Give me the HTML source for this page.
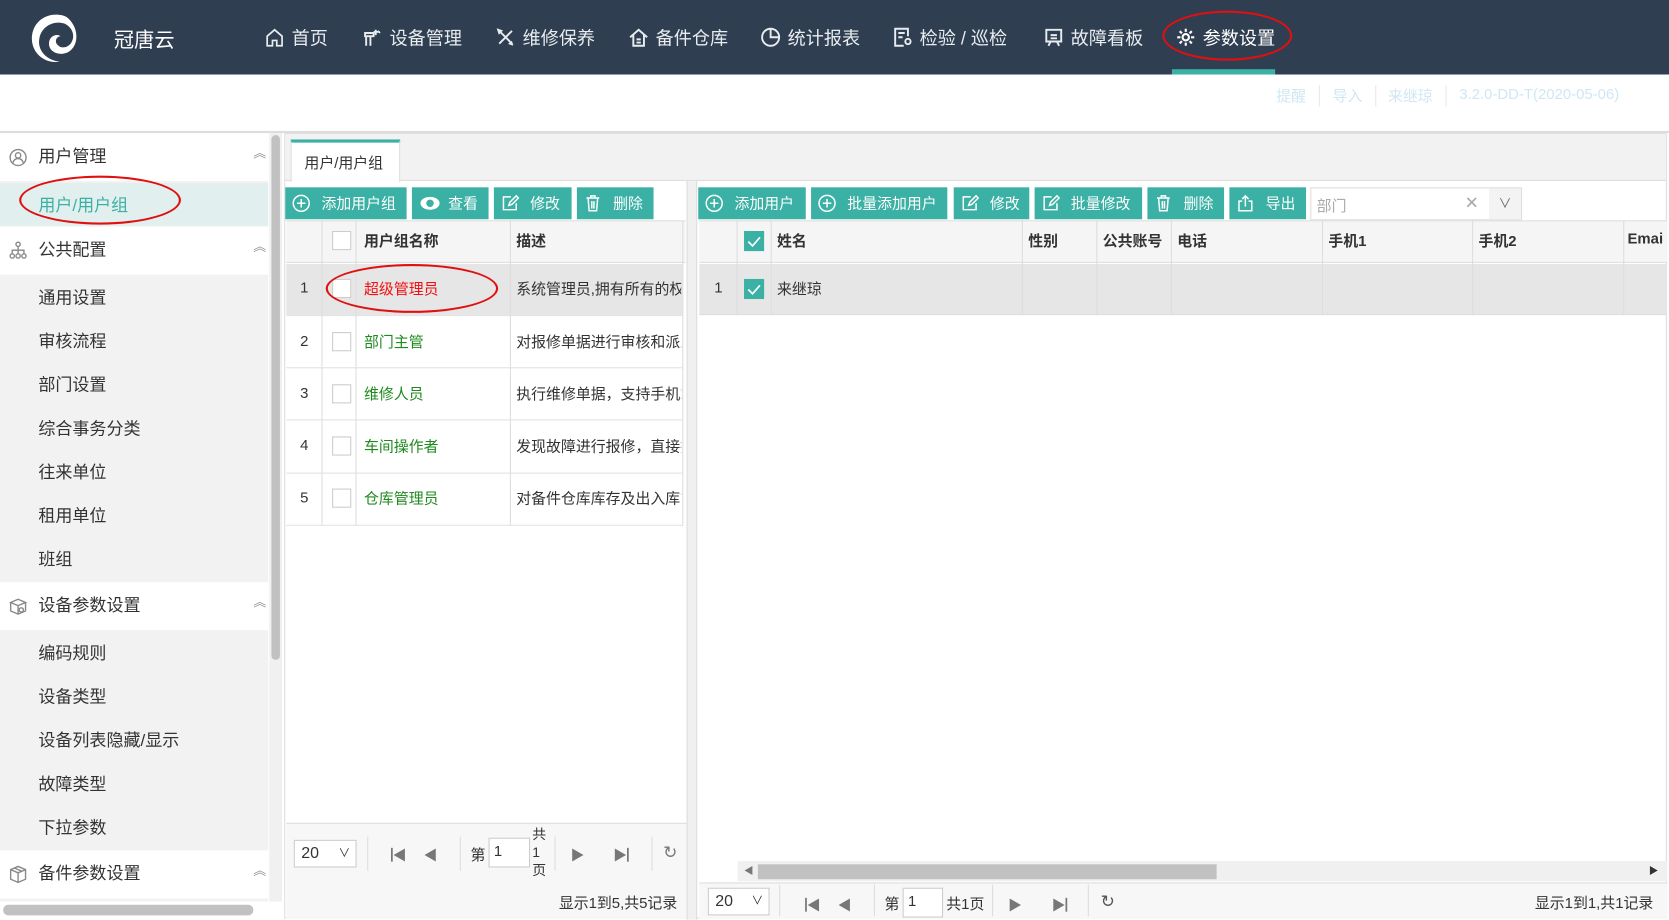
<!DOCTYPE html>
<html><head><meta charset="utf-8">
<style>
*{box-sizing:border-box;margin:0;padding:0}
html,body{width:1669px;height:920px;overflow:hidden;background:#fff}
#w{position:absolute;left:0;top:0;width:1568px;height:864px;transform:scale(1.06441);transform-origin:0 0;font-family:"Liberation Sans","Noto Sans CJK SC",sans-serif;font-size:14px;color:#333}
.a{position:absolute}
.hd{left:0;top:0;width:1568px;height:70px;background:#2f3e50}
.nav{color:#e8ecf0;font-size:17px;top:22px;white-space:nowrap}
.nav svg{vertical-align:-3px;margin-right:6px}
.top{color:#cfe7f4;font-size:14px;top:80px}
.sb{left:0;top:125px;width:252px;height:739px;background:#f2f2f2}
.sh{left:0;width:252px;height:45px;background:#fff;font-size:16px;color:#333}
.sh span{position:absolute;left:36px;top:8px}
.sh i{position:absolute;right:2px;top:10px;font-style:normal;color:#888;font-size:12px}
.si{left:36px;font-size:16px;color:#333}
.btn{top:176px;height:30px;background:#3bb0a5;color:#fff;font-size:14px;line-height:30px;white-space:nowrap}
.btn svg{position:absolute;left:6px;top:6px}
.btn b{font-weight:normal;position:absolute;top:0}
.th{font-weight:bold;font-size:14px;top:216px}
.cb{width:18px;height:18px;border:1px solid #ccc;background:#fff}
.vl{width:1px;background:#ddd}
.hl{height:1px;background:#e2e2e2}
.gr{color:#1e8a1e}
.sel{border:1px solid #ccc;background:#fff;height:26px;font-size:15px;padding-left:6px;line-height:24px}
.pg{color:#777;font-size:13px}
.ell{border:2px solid #e01010;border-radius:50%}
</style></head><body><div id="w">
<div class="a hd"></div>
<svg class="a" style="left:26px;top:10px" width="56" height="52" viewBox="0 0 56 52"><path d="M30 4C14 2 3 14 4 28c1 13 13 22 26 20C16 46 9 36 11 26 13 15 24 9 34 12c8 3 11 12 7 18-3 5-10 6-13 2-3-3-1-8 3-8-4-3-11 0-11 7 0 8 10 12 18 8 9-5 10-18 4-27-3-5-7-8-13-8z" fill="#fff"/></svg>
<div class="a" style="left:107px;top:23px;color:#fff;font-size:19px">冠唐云</div>
<div class="a nav" style="left:248px"><svg width="20" height="20" viewBox="0 0 20 20" fill="none" stroke="#e8ecf0" stroke-width="1.6"><path d="M3 9L10 3l7 6v9H12v-5H8v5H3z"/></svg>首页</div>
<div class="a nav" style="left:340px"><svg width="20" height="20" viewBox="0 0 20 20" fill="none" stroke="#e8ecf0" stroke-width="1.8"><path d="M4 18V9h4v9M3 6h8v3H3zM11 5h4M13 3v5M15 4l2 2"/></svg>设备管理</div>
<div class="a nav" style="left:465px"><svg width="20" height="20" viewBox="0 0 20 20" fill="none" stroke="#e8ecf0" stroke-width="1.8"><path d="M4 4l12 12M16 4L4 16M3 3l3 1-2 2zM17 17l-3-1 2-2"/></svg>维修保养</div>
<div class="a nav" style="left:590px"><svg width="20" height="20" viewBox="0 0 20 20" fill="none" stroke="#e8ecf0" stroke-width="1.8"><path d="M2 10L10 3l8 7M5 8v10h10V8M8 12h4M8 15h4"/></svg>备件仓库</div>
<div class="a nav" style="left:714px"><svg width="20" height="20" viewBox="0 0 20 20" fill="none" stroke="#e8ecf0" stroke-width="1.8"><circle cx="10" cy="10" r="8"/><path d="M10 2v8h8"/></svg>统计报表</div>
<div class="a nav" style="left:838px"><svg width="20" height="20" viewBox="0 0 20 20" fill="none" stroke="#e8ecf0" stroke-width="1.8"><path d="M11 18H3V2h12v7M6 6h6M6 10h4"/><circle cx="15" cy="14" r="2.5"/></svg>检验 / 巡检</div>
<div class="a nav" style="left:980px"><svg width="20" height="20" viewBox="0 0 20 20" fill="none" stroke="#e8ecf0" stroke-width="1.8"><path d="M3 3h14v11H3zM7 8h6M7 11h6M7 14l-2 4M13 14l2 4"/></svg>故障看板</div>
<div class="a nav" style="left:1104px;color:#fff"><svg width="20" height="20" viewBox="0 0 20 20" fill="none" stroke="#fff" stroke-width="2"><circle cx="10" cy="10" r="3"/><path d="M10 2v3M10 15v3M2 10h3M15 10h3M4.3 4.3l2.1 2.1M13.6 13.6l2.1 2.1M4.3 15.7l2.1-2.1M13.6 6.4l2.1-2.1"/></svg>参数设置</div>
<div class="a" style="left:1101px;top:65px;width:97px;height:5px;background:#3bb0a5"></div>
<div class="a ell" style="left:1092px;top:10px;width:122px;height:47px"></div>

<div class="a top" style="left:1199px">提醒</div>
<div class="a" style="left:1239px;top:80px;width:1px;height:20px;background:#e8e8e8"></div>
<div class="a top" style="left:1252px">导入</div>
<div class="a" style="left:1292px;top:80px;width:1px;height:20px;background:#e8e8e8"></div>
<div class="a top" style="left:1304px">来继琼</div>
<div class="a" style="left:1358px;top:80px;width:1px;height:20px;background:#e8e8e8"></div>
<div class="a top" style="left:1371px">3.2.0-DD-T(2020-05-06)</div>
<div class="a" style="left:0;top:123px;width:1568px;height:2px;background:#ddd"></div>

<div class="a sb"></div>
<div class="a sh" style="top:125px"><svg class="a" style="left:8px;top:14px" width="18" height="18" viewBox="0 0 18 18" fill="none" stroke="#888" stroke-width="1.3"><circle cx="9" cy="9" r="7.5"/><circle cx="9" cy="7" r="2.5"/><path d="M4 14c1-3 3-4 5-4s4 1 5 4"/></svg><span>用户管理</span><i>︽</i></div>
<div class="a" style="left:0;top:172px;width:252px;height:40px;background:#e1efee"></div>
<div class="a si" style="top:179px;color:#3bb0a5">用户/用户组</div>
<div class="a ell" style="left:18px;top:165px;width:152px;height:46px"></div>
<div class="a sh" style="top:213px"><svg class="a" style="left:8px;top:13px" width="18" height="18" viewBox="0 0 18 18" fill="none" stroke="#888" stroke-width="1.3"><circle cx="9" cy="3.5" r="2"/><circle cx="3.5" cy="14.5" r="2"/><circle cx="9" cy="14.5" r="2"/><circle cx="14.5" cy="14.5" r="2"/><path d="M9 5.5v7M3.5 12.5V9h11v3.5"/></svg><span>公共配置</span><i>︽</i></div>
<div class="a si" style="top:266px">通用设置</div>
<div class="a si" style="top:307px">审核流程</div>
<div class="a si" style="top:348px">部门设置</div>
<div class="a si" style="top:389px">综合事务分类</div>
<div class="a si" style="top:430px">往来单位</div>
<div class="a si" style="top:471px">租用单位</div>
<div class="a si" style="top:512px">班组</div>
<div class="a sh" style="top:547px"><svg class="a" style="left:8px;top:14px" width="18" height="18" viewBox="0 0 18 18" fill="none" stroke="#888" stroke-width="1.3"><path d="M2 5l7-3 7 3-7 3zM2 5v8l7 3 7-3V5M9 8v8"/><circle cx="12" cy="12" r="2"/></svg><span>设备参数设置</span><i>︽</i></div>
<div class="a si" style="top:600px">编码规则</div>
<div class="a si" style="top:641px">设备类型</div>
<div class="a si" style="top:682px">设备列表隐藏/显示</div>
<div class="a si" style="top:723px">故障类型</div>
<div class="a si" style="top:764px">下拉参数</div>
<div class="a sh" style="top:799px"><svg class="a" style="left:8px;top:13px" width="18" height="18" viewBox="0 0 18 18" fill="none" stroke="#888" stroke-width="1.3"><path d="M2 5l7-3 7 3v9l-7 3-7-3zM2 5l7 3 7-3M9 8v9M5.5 3.5l7 3"/></svg><span>备件参数设置</span><i>︽</i></div>
<div class="a" style="left:253px;top:125px;width:12px;height:739px;background:#f0f0f0"></div>
<div class="a" style="left:255px;top:127px;width:8px;height:493px;background:#c1c1c1;border-radius:4px"></div>
<div class="a" style="left:0;top:847px;width:265px;height:17px;background:#fff"></div>
<div class="a" style="left:3px;top:850px;width:235px;height:10px;background:#c1c1c1;border-radius:5px"></div>

<!-- main -->
<div class="a" style="left:267px;top:125px;width:1299px;height:738px;border:1px solid #ddd;background:#fff"></div>
<div class="a" style="left:268px;top:126px;width:1297px;height:44px;background:#f2f2f2;border-bottom:1px solid #ddd"></div>
<div class="a" style="left:273px;top:131px;width:103px;height:40px;background:#fff;border-top:3px solid #3bb0a5;border-left:1px solid #ddd;border-right:1px solid #ddd;font-size:14px;padding:9px 0 0 12px">用户/用户组</div>

<!-- left grid -->
<div class="a" style="left:645px;top:170px;width:10px;height:694px;background:#f0f0f0;border-left:1px solid #ddd;border-right:1px solid #ddd"></div>
<div class="a btn" style="left:268px;width:114px"><svg width="18" height="18" viewBox="0 0 18 18" fill="none" stroke="#fff" stroke-width="1.4"><circle cx="9" cy="9" r="7.5"/><path d="M9 5v8M5 9h8"/></svg><b style="left:34px">添加用户组</b></div>
<div class="a btn" style="left:387px;width:72px"><svg width="22" height="18" viewBox="0 0 22 18"><ellipse cx="11" cy="9" rx="9" ry="6" fill="#fff"/><circle cx="11" cy="9" r="3.5" fill="#3bb0a5"/></svg><b style="left:34px">查看</b></div>
<div class="a btn" style="left:464px;width:73px"><svg width="18" height="18" viewBox="0 0 18 18" fill="none" stroke="#fff" stroke-width="1.4"><path d="M10 3H3v12h12V9M8 11l1-3 6-6 2 2-6 6z"/></svg><b style="left:34px">修改</b></div>
<div class="a btn" style="left:542px;width:72px"><svg width="18" height="18" viewBox="0 0 18 18" fill="none" stroke="#fff" stroke-width="1.4"><path d="M3 4h12M7 4V2h4v2M4.5 4l1 12h7l1-12M8 7v7M10 7v7"/></svg><b style="left:34px">删除</b></div>

<div class="a" style="left:269px;top:207px;width:375px;height:40px;background:#f5f5f5;border-top:1px solid #ddd;border-bottom:1px solid #ddd"></div>
<div class="a cb" style="left:312px;top:217px"></div>
<div class="a th" style="left:342px">用户组名称</div>
<div class="a th" style="left:485px">描述</div>
<div class="a" style="left:269px;top:248px;width:372px;height:48px;background:#e6e6e6"></div>
<div class="a vl" style="left:302px;top:207px;height:287px"></div>
<div class="a vl" style="left:334px;top:207px;height:287px"></div>
<div class="a vl" style="left:479px;top:207px;height:287px"></div>
<div class="a vl" style="left:641px;top:207px;height:287px"></div>
<div class="a hl" style="left:269px;top:296px;width:372px"></div>
<div class="a hl" style="left:269px;top:345px;width:372px"></div>
<div class="a hl" style="left:269px;top:394px;width:372px"></div>
<div class="a hl" style="left:269px;top:444px;width:372px"></div>
<div class="a hl" style="left:269px;top:493px;width:372px"></div>
<div class="a" style="left:282px;top:262px">1</div><div class="a cb" style="left:312px;top:262px"></div><div class="a" style="left:342px;top:261px;color:#f01010">超级管理员</div><div class="a" style="left:485px;top:261px;width:155px;overflow:hidden;white-space:nowrap">系统管理员,拥有所有的权限</div>
<div class="a" style="left:282px;top:312px">2</div><div class="a cb" style="left:312px;top:312px"></div><div class="a gr" style="left:342px;top:311px">部门主管</div><div class="a" style="left:485px;top:311px;width:155px;overflow:hidden;white-space:nowrap">对报修单据进行审核和派工</div>
<div class="a" style="left:282px;top:361px">3</div><div class="a cb" style="left:312px;top:361px"></div><div class="a gr" style="left:342px;top:360px">维修人员</div><div class="a" style="left:485px;top:360px;width:155px;overflow:hidden;white-space:nowrap">执行维修单据，支持手机端</div>
<div class="a" style="left:282px;top:410px">4</div><div class="a cb" style="left:312px;top:410px"></div><div class="a gr" style="left:342px;top:409px">车间操作者</div><div class="a" style="left:485px;top:409px;width:155px;overflow:hidden;white-space:nowrap">发现故障进行报修，直接报</div>
<div class="a" style="left:282px;top:459px">5</div><div class="a cb" style="left:312px;top:459px"></div><div class="a gr" style="left:342px;top:458px">仓库管理员</div><div class="a" style="left:485px;top:458px;width:155px;overflow:hidden;white-space:nowrap">对备件仓库库存及出入库管</div>
<div class="a ell" style="left:306px;top:248px;width:162px;height:46px"></div>

<div class="a" style="left:269px;top:773px;width:376px;height:90px;background:#f7f7f7;border-top:1px solid #ddd"></div>
<div class="a sel" style="left:276px;top:789px;width:59px">20<span style="position:absolute;right:5px;font-size:11px">∨</span></div>
<div class="a vl" style="left:345px;top:786px;height:32px;background:#ddd"></div>
<div class="a pg" style="left:356px;top:793px">▕◀</div>
<div class="a pg" style="left:398px;top:793px">◀</div>
<div class="a vl" style="left:432px;top:786px;height:32px"></div>
<div class="a" style="left:442px;top:793px">第</div>
<div class="a" style="left:459px;top:787px;width:39px;height:28px;border:1px solid #ccc;background:#fff;padding:3px 0 0 4px">1</div>
<div class="a" style="left:500px;top:775px;font-size:13px;line-height:17px;width:14px">共 1 页</div>
<div class="a vl" style="left:521px;top:786px;height:32px"></div>
<div class="a pg" style="left:536px;top:793px">▶</div>
<div class="a pg" style="left:576px;top:793px">▶▏</div>
<div class="a vl" style="left:612px;top:786px;height:32px"></div>
<div class="a pg" style="left:623px;top:791px;font-size:16px">↻</div>
<div class="a" style="left:525px;top:838px;font-size:14px">显示1到5,共5记录</div>

<!-- right grid -->
<div class="a btn" style="left:656px;width:101px"><svg width="18" height="18" viewBox="0 0 18 18" fill="none" stroke="#fff" stroke-width="1.4"><circle cx="9" cy="9" r="7.5"/><path d="M9 5v8M5 9h8"/></svg><b style="left:34px">添加用户</b></div>
<div class="a btn" style="left:762px;width:128px"><svg width="18" height="18" viewBox="0 0 18 18" fill="none" stroke="#fff" stroke-width="1.4"><circle cx="9" cy="9" r="7.5"/><path d="M9 5v8M5 9h8"/></svg><b style="left:34px">批量添加用户</b></div>
<div class="a btn" style="left:896px;width:71px"><svg width="18" height="18" viewBox="0 0 18 18" fill="none" stroke="#fff" stroke-width="1.4"><path d="M10 3H3v12h12V9M8 11l1-3 6-6 2 2-6 6z"/></svg><b style="left:34px">修改</b></div>
<div class="a btn" style="left:972px;width:101px"><svg width="18" height="18" viewBox="0 0 18 18" fill="none" stroke="#fff" stroke-width="1.4"><path d="M10 3H3v12h12V9M8 11l1-3 6-6 2 2-6 6z"/></svg><b style="left:34px">批量修改</b></div>
<div class="a btn" style="left:1078px;width:72px"><svg width="18" height="18" viewBox="0 0 18 18" fill="none" stroke="#fff" stroke-width="1.4"><path d="M3 4h12M7 4V2h4v2M4.5 4l1 12h7l1-12M8 7v7M10 7v7"/></svg><b style="left:34px">删除</b></div>
<div class="a btn" style="left:1155px;width:72px"><svg width="18" height="18" viewBox="0 0 18 18" fill="none" stroke="#fff" stroke-width="1.4"><path d="M6 7H3v9h12V7h-3M9 12V2M6 5l3-3 3 3"/></svg><b style="left:34px">导出</b></div>
<div class="a" style="left:1231px;top:176px;width:199px;height:31px;border:1px solid #ddd;background:#fff"></div>
<div class="a" style="left:1237px;top:183px;color:#aaa">部门</div>
<div class="a" style="left:1376px;top:181px;color:#aaa;font-size:16px">✕</div>
<div class="a" style="left:1399px;top:177px;width:30px;height:29px;background:#f3f3f3;color:#666;font-size:12px;text-align:center;line-height:29px">∨</div>

<div class="a" style="left:657px;top:207px;width:909px;height:40px;background:#f5f5f5;border-top:1px solid #ddd;border-bottom:1px solid #ddd"></div>
<div class="a" style="left:657px;top:248px;width:909px;height:48px;background:#e6e6e6;border-bottom:1px solid #ddd"></div>
<div class="a vl" style="left:692px;top:207px;height:89px"></div>
<div class="a vl" style="left:724px;top:207px;height:89px"></div>
<div class="a vl" style="left:960px;top:207px;height:89px"></div>
<div class="a vl" style="left:1030px;top:207px;height:89px"></div>
<div class="a vl" style="left:1100px;top:207px;height:89px"></div>
<div class="a vl" style="left:1242px;top:207px;height:89px"></div>
<div class="a vl" style="left:1383px;top:207px;height:89px"></div>
<div class="a vl" style="left:1525px;top:207px;height:89px"></div>
<svg class="a" style="left:699px;top:217px" width="19" height="19"><rect width="19" height="19" fill="#3bb0a5"/><path d="M4 10l4 4 7-8" stroke="#fff" stroke-width="1.6" fill="none"/></svg>
<div class="a th" style="left:730px">姓名</div>
<div class="a th" style="left:966px">性别</div>
<div class="a th" style="left:1036px">公共账号</div>
<div class="a th" style="left:1106px">电话</div>
<div class="a th" style="left:1248px">手机1</div>
<div class="a th" style="left:1389px">手机2</div>
<div class="a th" style="left:1529px">Emai</div>
<div class="a" style="left:671px;top:262px">1</div>
<svg class="a" style="left:699px;top:262px" width="19" height="19"><rect width="19" height="19" fill="#3bb0a5"/><path d="M4 10l4 4 7-8" stroke="#fff" stroke-width="1.6" fill="none"/></svg>
<div class="a" style="left:730px;top:261px">来继琼</div>

<div class="a" style="left:693px;top:809px;width:873px;height:19px;background:#f0f0f0"></div>
<div class="a" style="left:712px;top:812px;width:431px;height:14px;background:#c1c1c1"></div>
<div class="a pg" style="left:699px;top:811px;font-size:9px">◀</div>
<div class="a pg" style="left:1549px;top:811px;font-size:9px;color:#333">▶</div>
<div class="a" style="left:657px;top:829px;width:909px;height:34px;background:#f7f7f7;border-top:1px solid #ddd"></div>
<div class="a sel" style="left:665px;top:834px;width:58px">20<span style="position:absolute;right:5px;font-size:11px">∨</span></div>
<div class="a vl" style="left:732px;top:831px;height:30px"></div>
<div class="a pg" style="left:745px;top:840px">▕◀</div>
<div class="a pg" style="left:787px;top:840px">◀</div>
<div class="a vl" style="left:821px;top:831px;height:30px"></div>
<div class="a" style="left:831px;top:839px">第</div>
<div class="a" style="left:848px;top:834px;width:38px;height:28px;border:1px solid #ccc;background:#fff;padding:3px 0 0 4px">1</div>
<div class="a" style="left:889px;top:839px">共1页</div>
<div class="a vl" style="left:932px;top:831px;height:30px"></div>
<div class="a pg" style="left:947px;top:840px">▶</div>
<div class="a pg" style="left:988px;top:840px">▶▏</div>
<div class="a vl" style="left:1022px;top:831px;height:30px"></div>
<div class="a pg" style="left:1034px;top:837px;font-size:16px;color:#555">↻</div>
<div class="a" style="left:1442px;top:838px">显示1到1,共1记录</div>
</div></body></html>
